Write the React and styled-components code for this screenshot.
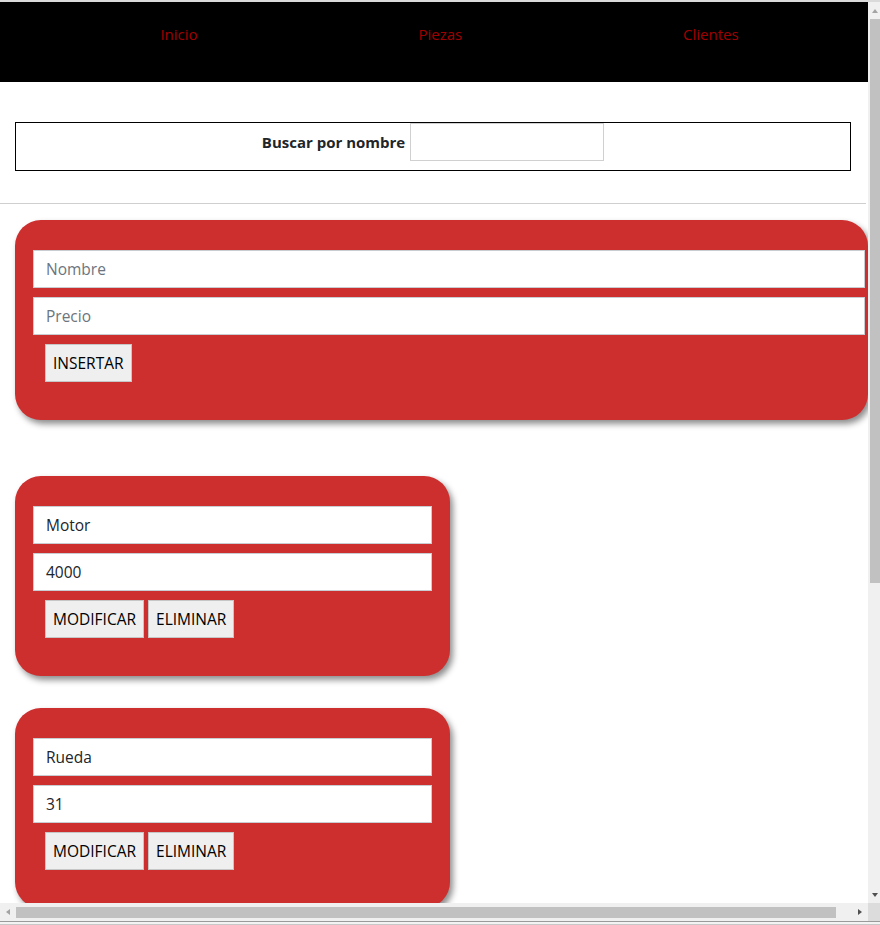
import React from 'react'
import styled, { createGlobalStyle } from 'styled-components'

const GlobalStyle = createGlobalStyle`
  html, body {
    margin: 0;
    padding: 0;
    background: #fff;
    overflow: hidden;
  }
  body {
    font-family: "Open Sans", "Liberation Sans", sans-serif;
    color: #212529;
  }
`

// browser frame with its scrollbars, as in the screenshot
const Frame = styled.div`
  width: 880px;
  height: 925px;
  display: flex;
  flex-direction: column;
  border-top: 2px solid #dadada;
  box-sizing: border-box;
`

const FrameBody = styled.div`
  flex: 1;
  display: grid;
  grid-template-columns: 868px 12px;
  grid-template-rows: 901px 18px;
`

const FrameBottom = styled.div`
  height: 4px;
  background: #f3f3f3;
  border-top: 1px solid #9a9a9a;
  border-bottom: 1px solid #c8c8c8;
  box-sizing: border-box;
`

const Viewport = styled.div`
  overflow: hidden;
`

const VScroll = styled.div`
  display: flex;
  flex-direction: column;
  background: #f0f0f0;
  padding-left: 2px;
`

const HScroll = styled.div`
  display: flex;
  align-items: center;
  background: #f0f0f0;
`

const Corner = styled.div`
  background: #dcdcdc;
`

const ArrowBox = styled.div`
  display: flex;
  align-items: center;
  justify-content: center;
  flex: 0 0 ${p => p.size}px;
  ${p => p.end && 'margin-top: auto;'}
  ${p => p.right && 'margin-left: auto;'}
`

const Triangle = styled.span`
  width: 0;
  height: 0;
  border: 3px solid transparent;
  ${p => p.dir === 'up' && 'border-bottom: 4px solid #a3a3a3; border-top: 0;'}
  ${p => p.dir === 'down' && 'border-top: 4px solid #505050; border-bottom: 0;'}
  ${p => p.dir === 'left' && 'border-right: 4px solid #a3a3a3; border-left: 0;'}
  ${p => p.dir === 'right' && 'border-left: 4px solid #505050; border-right: 0;'}
`

const VThumb = styled.div`
  height: 564px;
  background: #c1c1c1;
`

const HThumb = styled.div`
  width: 820px;
  height: 11px;
  background: #c1c1c1;
`

// page
const Nav = styled.nav`
  height: 80px;
  background: #000;
  display: flex;
  justify-content: space-around;
  align-items: flex-start;
  padding: 21px 19px 0 50px;
  box-sizing: border-box;
`

const NavLink = styled.a`
  color: #a20000;
  font-size: 15px;
  line-height: 22px;
  text-decoration: none;
  cursor: pointer;
`

const SearchBox = styled.form`
  margin: 40px 17px 0 15px;
  border: 1px solid #000;
  display: flex;
  justify-content: center;
  align-items: flex-start;
  height: 49px;
  box-sizing: border-box;
`

const SearchLabel = styled.label`
  font-weight: 700;
  font-size: 15px;
  line-height: 38px;
  margin-right: 5px;
  color: #212529;
`

const SearchInput = styled.input`
  width: 194px;
  height: 38px;
  box-sizing: border-box;
  border: 1px solid #d0d0d0;
  padding: 0 8px;
  font: inherit;
  outline: none;
`

const Rule = styled.hr`
  margin: 32px 2px 0 0;
  border: 0;
  border-top: 1px solid #cfcfcf;
`

const CardList = styled.div`
  display: flex;
  flex-direction: column;
  align-items: flex-start;
  padding: 16px 0 0 15px;
`

const Card = styled.div`
  width: ${p => p.width}px;
  height: 200px;
  box-sizing: border-box;
  background: #cd2e2e;
  border-radius: 26px;
  padding: 30px ${p => p.padRight}px 0 18px;
  margin-bottom: ${p => p.gap}px;
  box-shadow: 3px 4px 6px rgba(0, 0, 0, 0.45);
  flex-shrink: 0;
`

const Field = styled.input`
  display: block;
  width: 100%;
  height: 38px;
  box-sizing: border-box;
  border: 1px solid #c9ccd0;
  background: #fff;
  padding: 0 12px;
  font-family: inherit;
  font-size: 15.5px;
  color: #212529;
  margin-bottom: ${p => p.gap}px;
  outline: none;
  &::placeholder {
    color: #6c757d;
  }
`

const ButtonRow = styled.div`
  display: flex;
  gap: 4px;
  margin-left: 12px;
`

const Button = styled.button`
  height: 38px;
  padding: 0 7px;
  background: #efefef;
  border: 1px solid #c6c6c6;
  font-family: inherit;
  font-size: 15.5px;
  color: #000;
  cursor: pointer;
`

const pieces = [
  { name: 'Motor', price: '4000' },
  { name: 'Rueda', price: '31' },
]

export default function App() {
  return (
    <>
      <GlobalStyle />
      <Frame>
        <FrameBody>
          <Viewport>
            <Nav>
              <NavLink>Inicio</NavLink>
              <NavLink>Piezas</NavLink>
              <NavLink>Clientes</NavLink>
            </Nav>

            <SearchBox onSubmit={e => e.preventDefault()}>
              <SearchLabel>Buscar por nombre</SearchLabel>
              <SearchInput type="text" />
            </SearchBox>

            <Rule />

            <CardList>
              <Card width={853} padRight={3} gap={56}>
                <Field placeholder="Nombre" gap={9} />
                <Field placeholder="Precio" gap={8.5} />
                <ButtonRow>
                  <Button>INSERTAR</Button>
                </ButtonRow>
              </Card>

              {pieces.map((p, i) => (
                <Card key={i} width={435} padRight={18} gap={32}>
                  <Field defaultValue={p.name} gap={9} />
                  <Field defaultValue={p.price} gap={9} />
                  <ButtonRow>
                    <Button>MODIFICAR</Button>
                    <Button>ELIMINAR</Button>
                  </ButtonRow>
                </Card>
              ))}
            </CardList>
          </Viewport>

          <VScroll>
            <ArrowBox size={17}><Triangle dir="up" /></ArrowBox>
            <VThumb />
            <ArrowBox size={17} end><Triangle dir="down" /></ArrowBox>
          </VScroll>

          <HScroll>
            <ArrowBox size={16}><Triangle dir="left" /></ArrowBox>
            <HThumb />
            <ArrowBox size={17} right><Triangle dir="right" /></ArrowBox>
          </HScroll>
          <Corner />
        </FrameBody>
        <FrameBottom />
      </Frame>
    </>
  )
}
